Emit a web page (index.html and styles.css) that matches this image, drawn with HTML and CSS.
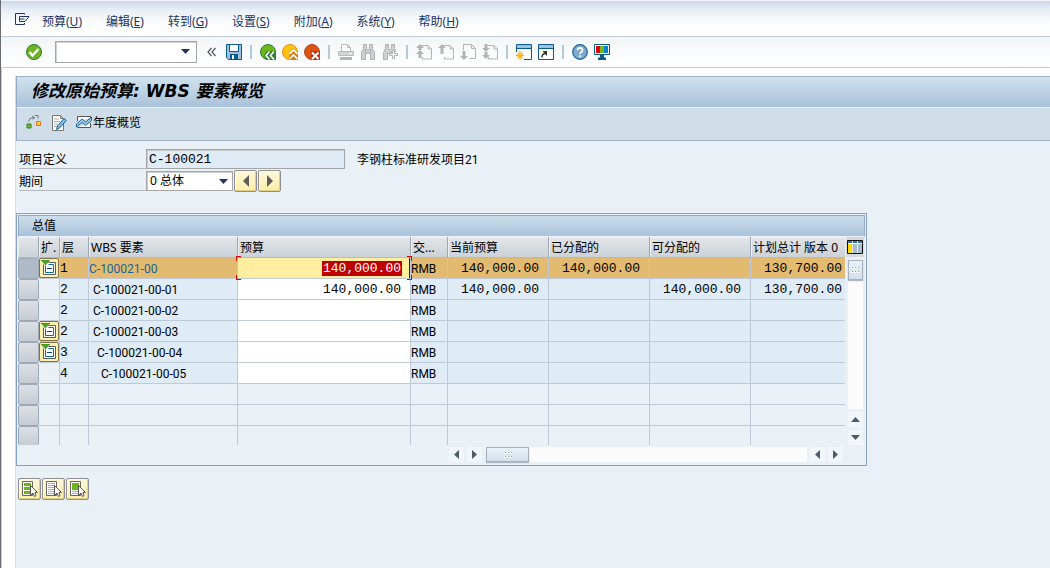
FILE: index.html
```html
<!DOCTYPE html>
<html lang="zh-CN">
<head>
<meta charset="utf-8">
<title>修改原始预算: WBS 要素概览</title>
<link rel="stylesheet" href="styles.css">
</head>
<body>
<svg class="defs" aria-hidden="true">
  <defs>
    <symbol id="page" viewBox="0 0 16 16"><path d="M5.500 1.500h6.500l3.500 3.500v10h-9v-2M12 1.500v3.500h3.500" fill="none" stroke="#b4b4b4"/></symbol>
    <symbol id="expand" viewBox="0 0 16 16"><path d="M7.500 2.500h7v12h-12v-10" fill="#fff" stroke="#5b5b5b"/><path d="M4.500 5.500v7h8v-8h-5" fill="#fff" stroke="#0c6ca4"/><path d="M6 8.500h5" stroke="#0b3f8a"/><path d="M0 0h9L4.500 5z" fill="#4fa32b" stroke="#35802b" stroke-width=".6"/></symbol>
    <symbol id="cursor" viewBox="0 0 16 16"><path d="M8.500 4.500v10l2.500-2.500 1.500 3.500 1.500-1-1-3h2.500z" fill="#fff" stroke="#555"/></symbol>
    <symbol id="grip" viewBox="0 0 8 6"><path d="M0 1h2M3 1h2M6 1h2M0 5h2M3 5h2M6 5h2" stroke="#fff" stroke-width="2"/><path d="M1 .5h1M4 .5h1M7 .5h1M1 4.500h1M4 4.500h1M7 4.500h1" stroke="#8b9dab"/></symbol>
  </defs>
</svg>
<div class="window">
  <nav class="menubar" aria-label="菜单">
    <button class="icon-btn" type="button" aria-label="窗口菜单"><svg class="i16" viewBox="0 0 16 16"><path d="M10.500 3.500v-1h-9v11h9v-1.500" fill="none" stroke="#203463"/><path d="M5.500 5.500h9.500l-4 5h-5.500M5.500 5.500v5M5.500 8h5" fill="none" stroke="#203463"/></svg></button>
    <button type="button">预算(<u>U</u>)</button>
    <button type="button">编辑(<u>E</u>)</button>
    <button type="button">转到(<u>G</u>)</button>
    <button type="button">设置(<u>S</u>)</button>
    <button type="button">附加(<u>A</u>)</button>
    <button type="button">系统(<u>Y</u>)</button>
    <button type="button">帮助(<u>H</u>)</button>
  </nav>

  <div class="toolbar">
    <button class="icon-btn" type="button" aria-label="回车"><svg class="i16" viewBox="0 0 16 16"><circle cx="8" cy="8" r="7.500" fill="#6fb51d" stroke="#2f7f35"/><path d="M3.500 8l3 3.500L12.500 5" fill="none" stroke="#fff" stroke-width="2.400"/></svg></button>
    <div class="command"><input type="text" aria-label="命令"><button type="button" aria-label="命令历史"><svg class="arrow" viewBox="0 0 9 5"><path d="M0 0h9L4.500 5z" fill="#203463"/></svg></button></div>
    <button class="icon-btn collapse" type="button" aria-label="折叠"><svg class="i10" viewBox="0 0 10 10"><path d="M4.500 1L1 5l3.500 4M8.500 1L5 5l3.500 4" fill="none" stroke="#555" stroke-width="1.200"/></svg></button>
    <button class="icon-btn" type="button" aria-label="保存"><svg class="i16" viewBox="0 0 16 16"><path d="M.5.5h15v15H2.500L.5 13.500z" fill="#9fc0dd" stroke="#075b8d"/><path d="M3.500.5h9v7h-9z" fill="#fff" stroke="#075b8d"/><path d="M4 10h8v6H4z" fill="#075b8d"/><path d="M6 11h2v4H6z" fill="#fff"/></svg></button>
    <span class="sep"></span>
    <button class="icon-btn" type="button" aria-label="返回"><svg class="i16" viewBox="0 0 16 16"><circle cx="8" cy="8" r="7.500" fill="#6fb51d" stroke="#2f7f35"/><path d="M7 7h9v9H7l-3-4.500z" fill="#2f7f35"/><path d="M9.500 7.500L6 11.500l3.500 4M14 7.500l-3.500 4 3.500 4" fill="none" stroke="#fff" stroke-width="1.600"/></svg></button>
    <button class="icon-btn" type="button" aria-label="退出"><svg class="i16" viewBox="0 0 16 16"><circle cx="8" cy="8" r="7.500" fill="#ffc411" stroke="#e68a13"/><path d="M11.500 4L16 9v7H7V9z" fill="#e07b12"/><path d="M7.500 10l4-4 4 4M7.500 15l4-4 4 4" fill="none" stroke="#fff" stroke-width="1.600"/></svg></button>
    <button class="icon-btn" type="button" aria-label="取消"><svg class="i16" viewBox="0 0 16 16"><circle cx="8" cy="8" r="7.500" fill="#da5512" stroke="#b9411a"/><path d="M7 7h9v9H7z" fill="#b9361a"/><path d="M8 8.500l6.500 6.500M14.500 8.500L8 15" stroke="#fff" stroke-width="2"/></svg></button>
    <span class="sep"></span>
    <button class="icon-btn" type="button" aria-label="打印" disabled><svg class="i16" viewBox="0 0 16 16"><path d="M3.500 7V.5h6l3 3V7" fill="#fff" stroke="#bbb"/><path d="M9.500.5v3h3" fill="none" stroke="#bbb"/><path d="M.5 7.500h15v4H.5z" fill="#d4d4d4" stroke="#bbb"/><path d="M2 13h12v3H2z" fill="#b6b6b6"/><path d="M11 9.500h3" stroke="#fff"/></svg></button>
    <button class="icon-btn" type="button" aria-label="查找" disabled><svg class="i16" viewBox="0 0 16 16"><path d="M3.500.5h3v4l.5 1h2l.5-1v-4h3v4l2 4v7h-4v-6h-5v6h-4v-7l2-4z" fill="#d0d0d0" stroke="#b0b0b0"/><path d="M5.500 5v4M10.500 5v4" stroke="#aaa"/></svg></button>
    <button class="icon-btn" type="button" aria-label="继续查找" disabled><svg class="i16" viewBox="0 0 16 16"><path d="M3.500.5h3v4l.5 1h2l.5-1v-4h3v4l1 3h-4v2h-4v6h-4v-7l2-4z" fill="#d0d0d0" stroke="#b0b0b0"/><path d="M10.500 6.500h2v3h3v2h-3v3h-2v-3h-3v-2h3z" fill="#fff" stroke="#b0b0b0"/></svg></button>
    <span class="sep"></span>
    <button class="icon-btn" type="button" aria-label="第一页" disabled><svg class="i16" viewBox="0 0 16 16"><use href="#page"/><path d="M4 0l4 4H5.500v2H2.500V4H0zM4 6l4 4H5.500v4H2.500v-4H0z" fill="#b4b4b4"/></svg></button>
    <button class="icon-btn" type="button" aria-label="上一页" disabled><svg class="i16" viewBox="0 0 16 16"><use href="#page"/><path d="M4 0l4 4H5.500v6H2.500V4H0z" fill="#b4b4b4"/></svg></button>
    <button class="icon-btn" type="button" aria-label="下一页" disabled><svg class="i16" viewBox="0 0 16 16"><path d="M3.500 6V.500h8l4 4v10h-6M11.500.5v4h4" fill="none" stroke="#b4b4b4"/><path d="M4 16l4-4H5.500V7H2.500v5H0z" fill="#b4b4b4"/></svg></button>
    <button class="icon-btn" type="button" aria-label="末页" disabled><svg class="i16" viewBox="0 0 16 16"><use href="#page"/><path d="M4 8l4-4H5.500V0H2.500v4H0zM4 15l4-4H5.500V8H2.500v3H0z" fill="#b4b4b4"/></svg></button>
    <span class="sep"></span>
    <button class="icon-btn" type="button" aria-label="新建会话"><svg class="i16" viewBox="0 0 16 16"><path d="M.5.5h15v15H.5z" fill="#fff"/><path d="M.5 8V.5h15v15H8" fill="none" stroke="#075b8d"/><path d="M1 1h14v3H1z" fill="#a5c1dc"/><path d="M0 4.500h16" stroke="#075b8d"/><path d="M4 7v9M0 11.500h8M1 8.500l6 6M7 8.500l-6 6" stroke="#f09a10"/><circle cx="4" cy="11.500" r="2.500" fill="#ffbe08"/></svg></button>
    <button class="icon-btn" type="button" aria-label="创建快捷方式"><svg class="i16" viewBox="0 0 16 16"><path d="M.5.5h15v15H.5z" fill="#fff" stroke="#075b8d"/><path d="M1 1h14v3H1z" fill="#a5c1dc"/><path d="M0 4.500h16" stroke="#075b8d"/><path d="M4 13.500c0-2.500 1-4 3.500-4" fill="none" stroke="#333" stroke-width="1.500"/><path d="M4.500 7H9v5z" fill="#333"/></svg></button>
    <span class="sep"></span>
    <button class="icon-btn" type="button" aria-label="帮助"><svg class="i16" viewBox="0 0 16 16"><circle cx="8" cy="8" r="7.300" fill="#7fa9cf" stroke="#1b6494" stroke-width="1.200"/><path d="M5.500 6.200c0-3.200 5-3.200 5 0 0 1.800-2.400 1.800-2.400 3.800M8 11.300v2" fill="none" stroke="#fff" stroke-width="1.700"/></svg></button>
    <button class="icon-btn" type="button" aria-label="自定义布局"><svg class="i16" viewBox="0 0 16 16"><path d="M.5.5h15v10H.5z" fill="#fff" stroke="#075b8d"/><path d="M2 2h4v7H2z" fill="#d00"/><path d="M6 2h4v7H6z" fill="#76b51c"/><path d="M10 2h4v7h-4z" fill="#0a7fd0"/><path d="M6 11h4v2.500h2V16H4v-2.500h2z" fill="#075b8d"/></svg></button>
  </div>

  <main class="content">
    <header class="titlebar"><h1>修改原始预算: WBS 要素概览</h1></header>
    <div class="appbar">
      <button class="icon-btn" type="button" aria-label="层次"><svg class="i16" viewBox="0 0 16 16"><path d="M2.500 6.500l1.500-3 4-1M6 1l2.500 1.500L7 4.500M9 .500h3v3" fill="none" stroke="#777"/><path d="M1 9h4v4H1z" fill="#7cba20" stroke="#2f7f35"/><path d="M10.500 6.500h4v4h-4z" fill="#ffd522" stroke="#e8731a"/></svg></button>
      <button class="icon-btn" type="button" aria-label="长文本"><svg class="i16" viewBox="0 0 16 16"><path d="M1.500.5h8l3 3v12h-11z" fill="#fff" stroke="#777"/><path d="M9.500.5v3h3" fill="none" stroke="#777"/><path d="M3 4h5M3 6.500h6M3 9h4M3 11.500h3" stroke="#aaa"/><path d="M5.500 14.500l1-3.500L13 3.500l2.300 2L8.500 13z" fill="#8fb9dc" stroke="#12689b"/></svg></button>
      <button class="icon-btn text-btn" type="button"><svg class="i16" viewBox="0 0 16 16"><path d="M1.500 6V1.500h13V3M14.500 8v4.500h-13" fill="#fff" stroke="#555"/><path d="M.5 9L6 4l3.500 3L15.500 2v3.500L9.500 10.500 6 7.500.5 12z" fill="#9cc4e4" stroke="#12689b"/></svg>年度概览</button>
    </div>

    <form class="form">
      <div class="field">
        <label for="project">项目定义</label>
        <input class="mono readonly" id="project" type="text" value="C-100021" readonly>
        <span class="desc">李钢柱标准研发项目21</span>
      </div>
      <div class="field">
        <label for="period">期间</label>
        <span class="select"><select id="period"><option>0 总体</option></select><svg class="arrow" viewBox="0 0 9 5"><path d="M0 0h9L4.500 5z" fill="#203463"/></svg></span>
        <span class="pair">
          <button class="push" type="button" aria-label="上一期间"><svg class="i16" viewBox="0 0 16 16"><path d="M11 2v12L5 8z" fill="#5d5d5d"/></svg></button>
          <button class="push" type="button" aria-label="下一期间"><svg class="i16" viewBox="0 0 16 16"><path d="M5 2v12l6-6z" fill="#5d5d5d"/></svg></button>
        </span>
      </div>
    </form>

    <section class="panel" aria-labelledby="totals">
      <h2 id="totals">总值</h2>
      <div class="grid-area">
        <table>
          <colgroup><col class="c-sel"><col class="c-exp"><col class="c-lvl"><col class="c-wbs"><col class="c-bud"><col class="c-cur"><col class="c-num"><col class="c-num"><col class="c-num"><col class="c-plan"></colgroup>
          <thead><tr><th></th><th>扩.</th><th>层</th><th>WBS 要素</th><th>预算</th><th>交...</th><th>当前预算</th><th>已分配的</th><th>可分配的</th><th>计划总计 版本 0</th></tr></thead>
          <tbody>
            <tr class="current"><td class="sel"></td><td class="exp"><button class="node" type="button" aria-label="展开"><svg class="i16"><use href="#expand"/></svg></button></td><td class="lvl">1</td><td class="wbs"><a href="#">C-100021-00</a></td><td class="budget focus"><input class="mono" type="text" value="140,000.00" aria-label="预算 C-100021-00"><i class="corners left"></i><i class="corners right"></i></td><td class="cur">RMB</td><td class="num">140,000.00</td><td class="num">140,000.00</td><td class="num"></td><td class="num last">130,700.00</td></tr>
            <tr><td class="sel"></td><td class="exp"></td><td class="lvl">2</td><td class="wbs l2">C-100021-00-01</td><td class="budget"><input class="mono" type="text" value="140,000.00" aria-label="预算 C-100021-00-01"></td><td class="cur">RMB</td><td class="num">140,000.00</td><td class="num"></td><td class="num">140,000.00</td><td class="num last">130,700.00</td></tr>
            <tr><td class="sel"></td><td class="exp"></td><td class="lvl">2</td><td class="wbs l2">C-100021-00-02</td><td class="budget"><input class="mono" type="text" aria-label="预算 C-100021-00-02"></td><td class="cur">RMB</td><td></td><td></td><td></td><td></td></tr>
            <tr><td class="sel"></td><td class="exp"><button class="node" type="button" aria-label="展开"><svg class="i16"><use href="#expand"/></svg></button></td><td class="lvl">2</td><td class="wbs l2">C-100021-00-03</td><td class="budget"><input class="mono" type="text" aria-label="预算 C-100021-00-03"></td><td class="cur">RMB</td><td></td><td></td><td></td><td></td></tr>
            <tr><td class="sel"></td><td class="exp"><button class="node" type="button" aria-label="展开"><svg class="i16"><use href="#expand"/></svg></button></td><td class="lvl">3</td><td class="wbs l3">C-100021-00-04</td><td class="budget"><input class="mono" type="text" aria-label="预算 C-100021-00-04"></td><td class="cur">RMB</td><td></td><td></td><td></td><td></td></tr>
            <tr><td class="sel"></td><td class="exp"></td><td class="lvl">4</td><td class="wbs l4">C-100021-00-05</td><td class="budget"><input class="mono" type="text" aria-label="预算 C-100021-00-05"></td><td class="cur">RMB</td><td></td><td></td><td></td><td></td></tr>
            <tr class="empty"><td class="sel"></td><td></td><td></td><td></td><td></td><td></td><td></td><td></td><td></td><td></td></tr>
            <tr class="empty"><td class="sel"></td><td></td><td></td><td></td><td></td><td></td><td></td><td></td><td></td><td></td></tr>
            <tr class="empty"><td class="sel"></td><td></td><td></td><td></td><td></td><td></td><td></td><td></td><td></td><td></td></tr>
          </tbody>
        </table>
        <div class="vscroll">
          <button class="config" type="button" aria-label="配置"><svg class="i16" viewBox="0 0 16 16"><path d="M.5 1.500h15v13H.5z" fill="#fff" stroke="#111"/><path d="M1 2h14v2H1z" fill="#2f6fb0"/><path d="M1 5h4v9H1z" fill="#ffd800"/><path d="M6 5h4v9H6zM11 5h4v9h-4z" fill="#a9bdc9"/><path d="M5.500 2v12M10.500 2v12" stroke="#eee"/></svg></button>
          <div class="track"><div class="thumb"><svg class="grip" viewBox="0 0 8 6"><use href="#grip"/></svg></div></div>
          <button class="scroll-btn" type="button" aria-label="向上"><svg class="tri" viewBox="0 0 9 9"><path d="M0 7h9L4.500 2z" fill="#4a5d6b"/></svg></button>
          <button class="scroll-btn" type="button" aria-label="向下"><svg class="tri" viewBox="0 0 9 9"><path d="M0 2h9L4.500 7z" fill="#4a5d6b"/></svg></button>
        </div>
      </div>
      <div class="hscroll">
        <button class="scroll-btn" type="button" aria-label="最左"><svg class="tri" viewBox="0 0 9 9"><path d="M7 0v9L2 4.500z" fill="#4a5d6b"/></svg></button>
        <button class="scroll-btn" type="button" aria-label="向右一列"><svg class="tri" viewBox="0 0 9 9"><path d="M2 0v9l5-4.500z" fill="#4a5d6b"/></svg></button>
        <div class="track"><div class="thumb"><svg class="grip" viewBox="0 0 8 6"><use href="#grip"/></svg></div></div>
        <button class="scroll-btn" type="button" aria-label="向左"><svg class="tri" viewBox="0 0 9 9"><path d="M7 0v9L2 4.500z" fill="#4a5d6b"/></svg></button>
        <button class="scroll-btn" type="button" aria-label="向右"><svg class="tri" viewBox="0 0 9 9"><path d="M2 0v9l5-4.500z" fill="#4a5d6b"/></svg></button>
      </div>
    </section>

    <div class="actions">
      <button class="push" type="button" aria-label="全选"><svg class="i16" viewBox="0 0 16 16"><path d="M.5.5h10v14H.5z" fill="#fff" stroke="#666"/><path d="M2 2h7v3H2zM2 6h6v3H2zM2 10h6v3H2z" fill="#6db31b"/><use href="#cursor"/></svg></button>
      <button class="push" type="button" aria-label="取消全选"><svg class="i16" viewBox="0 0 16 16"><path d="M.5.5h10v14H.5z" fill="#fff" stroke="#666"/><path d="M2 2.500h7M2 4.500h7M2 6.500h6M2 8.500h6M2 10.500h6M2 12.500h6" stroke="#aaa"/><use href="#cursor"/></svg></button>
      <button class="push" type="button" aria-label="选择块"><svg class="i16" viewBox="0 0 16 16"><path d="M.5.5h10v14H.5z" fill="#fff" stroke="#666"/><path d="M2 2h7v7H2z" fill="#6db31b"/><path d="M2 10.500h6M2 12.500h6" stroke="#aaa"/><use href="#cursor"/></svg></button>
    </div>
  </main>
</div>
</body>
</html>
```
FILE: styles.css
```css
* { box-sizing: border-box; }
body {
  margin: 0;
  background: #fff;
  color: #000;
  font: 12px/16px "Noto Sans", "Noto Sans CJK SC", sans-serif;
}
button, input, select { font: inherit; color: inherit; margin: 0; padding: 0; }
button { background: none; border: 0; }
svg { display: block; flex: none; }
.defs { position: absolute; width: 0; height: 0; }
.i16 { width: 16px; height: 16px; }
.i10 { width: 10px; height: 10px; }
.arrow { width: 9px; height: 5px; }
.tri { width: 9px; height: 9px; }
.grip { width: 8px; height: 6px; }
.mono, .num, .lvl { font-family: "Liberation Mono", monospace; font-size: 13px; }

.window {
  display: flex;
  flex-direction: column;
  min-height: 100vh;
  border-left: 1px solid #6a6c72;
  box-shadow: inset 1px 0 #c9ccd2;
}
.menubar {
  display: flex;
  align-items: center;
  gap: 24px;
  height: 37px;
  padding: 6px 13px 0;
  border-top: 1px solid #f3f7fc;
  border-bottom: 1px solid #c3cbdb;
  background: linear-gradient(#cad7e8, #e9eef6 25%, #fafbfd 60%, #fff);
  color: #203463;
}
.menubar .icon-btn { margin-right: -12px; padding-bottom: 6px; }
.toolbar {
  display: flex;
  align-items: center;
  gap: 6px;
  height: 31px;
  padding: 0 25px 1px;
  border-bottom: 1px solid #ccc;
  background: linear-gradient(#f2f5f8, #fff);
}
.icon-btn { display: flex; align-items: center; }
.sep { width: 6px; height: 14px; background: linear-gradient(#b3c9dc, #b3c9dc) center / 2px 100% no-repeat; }
.command {
  display: flex;
  align-items: center;
  width: 142px;
  height: 22px;
  margin: 0 4px 0 7px;
  padding: 0 6px 0 3px;
  border: 1px solid #a5a5a5;
  box-shadow: inset 1px 1px #d2d2d2;
  background: #fff;
}
.command input { flex: 1; min-width: 0; border: 0; background: none; }
.collapse { margin-right: 3px; }

.content {
  flex: 1;
  margin: 8px 0 0 14px;
  background: #e9f0f6;
  border-left: 1px solid #d3dbe6;
}
.titlebar {
  display: flex;
  align-items: center;
  height: 32px;
  padding: 0 14px 2px;
  border-top: 1px solid #9fb6ca;
  border-left: 1px solid #94aac2;
  border-bottom: 1px solid #e8f1f9;
  background: linear-gradient(#d1e1ed, #a9c2da);
}
h1 {
  margin: 0;
  font: italic 700 17px/24px "DejaVu Sans", "Noto Sans CJK SC", sans-serif;
}
.appbar {
  display: flex;
  align-items: center;
  gap: 9px;
  height: 33px;
  padding: 0 9px 2px;
  border-left: 1px solid #94aac2;
  border-bottom: 1px solid #a4b5cc;
  background: #cfdde8;
}
.text-btn { gap: 1px; }

.form { display: flex; flex-direction: column; gap: 2px; padding: 8px 3px 0; }
.field { display: flex; align-items: center; height: 20px; }
.field label {
  width: 127px;
  height: 20px;
  padding-top: 3px;
  border-bottom: 1px solid #b5b8bb;
}
.field input, .select {
  height: 20px;
  border: 1px solid #a5a5a5;
  box-shadow: inset 1px 1px #c9cdd0;
  background: #fff;
}
.field .readonly { width: 199px; padding-left: 2px; background: #dfebf5; }
.desc { margin-left: 12px; padding-top: 1px; }
.select { display: flex; align-items: center; width: 87px; padding-right: 4px; }
.select select { flex: 1; min-width: 0; height: 18px; padding-left: 3px; border: 0; background: none; appearance: none; }
.pair { display: flex; gap: 1px; margin-left: 1px; }
.push {
  display: flex;
  align-items: center;
  justify-content: center;
  width: 23px;
  height: 22px;
  border: 1px solid #8f8f8f;
  border-radius: 2px;
  box-shadow: inset 1px 1px #fffbe6, inset -1px -1px #e2cf87;
  background: linear-gradient(#fdf8dd, #ffeea6);
}

.panel {
  width: fit-content;
  margin: 22px 0 0;
  padding: 1px;
  border: 1px solid #87a2c2;
}
h2 {
  margin: 0;
  height: 22px;
  padding-left: 13px;
  border: 1px solid #93abc6;
  border-bottom-color: #e8f0f8;
  background: linear-gradient(#cddeeb, #a9c3da);
  font-size: 12px;
  line-height: 20px;
  font-weight: 400;
}
.grid-area { display: flex; }
table { table-layout: fixed; width: 827px; border-collapse: separate; border-spacing: 0; }
.c-sel, .c-exp { width: 21px; }
.c-lvl { width: 29px; }
.c-wbs { width: 149px; }
.c-bud { width: 173px; }
.c-cur { width: 37px; }
.c-num { width: 101px; }
.c-plan { width: 94px; }
th, td { height: 21px; padding: 0; line-height: 18px; white-space: nowrap; text-align: left; }
th {
  padding: 2px 0 0 2px;
  border-right: 1px solid #9aa7b7;
  border-bottom: 1px solid #b3bac3;
  background: linear-gradient(#e3e5e8, #ccd2d9);
  box-shadow: inset 1px 1px #eef0f2;
  font-weight: 400;
}
th:last-child, td:last-child { border-right: 0; }
td { border-right: 1px solid #c0c9d8; border-bottom: 1px solid #c0c9d8; background: #dfebf5; }
td.lvl, td.num, td.wbs, td.cur { padding-top: 2px; }
td.exp, .empty td { background: #e9f0f6; }
.current td { background: #e2bb71; }
tbody tr:last-child td { height: 19px; border-bottom: 0; }
td.sel, .current td.sel {
  border: 1px solid #9da8b9;
  border-radius: 2px;
  background: linear-gradient(#dde0e5, #c6ccd4);
}
.current td.sel { background: #aebac8; }
.node {
  display: flex;
  width: 20px;
  height: 20px;
  padding: 1px;
  border: 1px solid #81744d;
  border-radius: 2px;
  background: #fff0ae;
}
td.num { padding-right: 9px; text-align: right; }
td.num.last { padding-right: 3px; }
.wbs, .cur, .desc { font-family: Roboto, "Noto Sans CJK SC", sans-serif; }
.wbs a { color: #1a6196; text-decoration: none; }
.wbs.l2 { padding-left: 4px; }
.wbs.l3 { padding-left: 8px; }
.wbs.l4 { padding-left: 12px; }
.budget { position: relative; }
.budget input { display: block; width: 100%; height: 20px; padding-right: 9px; border: 0; background: #fff; text-align: right; }
.budget.focus input {
  border-right: 1px solid #1d2b52;
  padding-right: 8px;
  background: linear-gradient(#bf0000, #bf0000) right 7px center / 80px 15px no-repeat, #ffee9f;
  color: #fff;
}
.corners {
  position: absolute;
  z-index: 1;
  top: -2px;
  bottom: -2px;
  width: 5px;
  background:
    linear-gradient(#e00000, #e00000) 0 0 / 100% 1px no-repeat,
    linear-gradient(#e00000, #e00000) 0 100% / 100% 1px no-repeat,
    linear-gradient(#e00000, #e00000) 0 0 / 1px 5px no-repeat,
    linear-gradient(#e00000, #e00000) 0 100% / 1px 5px no-repeat;
}
.corners.left { left: -2px; }
.corners.right { right: -2px; transform: scaleX(-1); }

.vscroll { display: flex; flex-direction: column; align-items: center; gap: 3px; width: 20px; }
.config { width: 18px; height: 20px; padding: 2px 1px; background: #d5dade; }
.track { display: flex; background: #fbfbfb; }
.vscroll .track { flex: 1; width: 15px; }
.thumb {
  display: flex;
  align-items: center;
  justify-content: center;
  border: 1px solid #a5b2bd;
  box-shadow: 0 1px 1px #aeb9c2;
  background: linear-gradient(#eaf1f7, #d2dfea);
}
.vscroll .thumb { width: 15px; height: 20px; }
.hscroll .thumb { width: 43px; height: 15px; }
.scroll-btn {
  display: flex;
  align-items: center;
  justify-content: center;
  flex: none;
  width: 15px;
  height: 15px;
  background: #f2f6fa;
}
.hscroll { display: flex; gap: 3px; padding: 2px 22px 2px 431px; }
.hscroll .track { flex: 1; padding-left: 1px; }
.actions { display: flex; gap: 1px; padding: 12px 2px; }
```
